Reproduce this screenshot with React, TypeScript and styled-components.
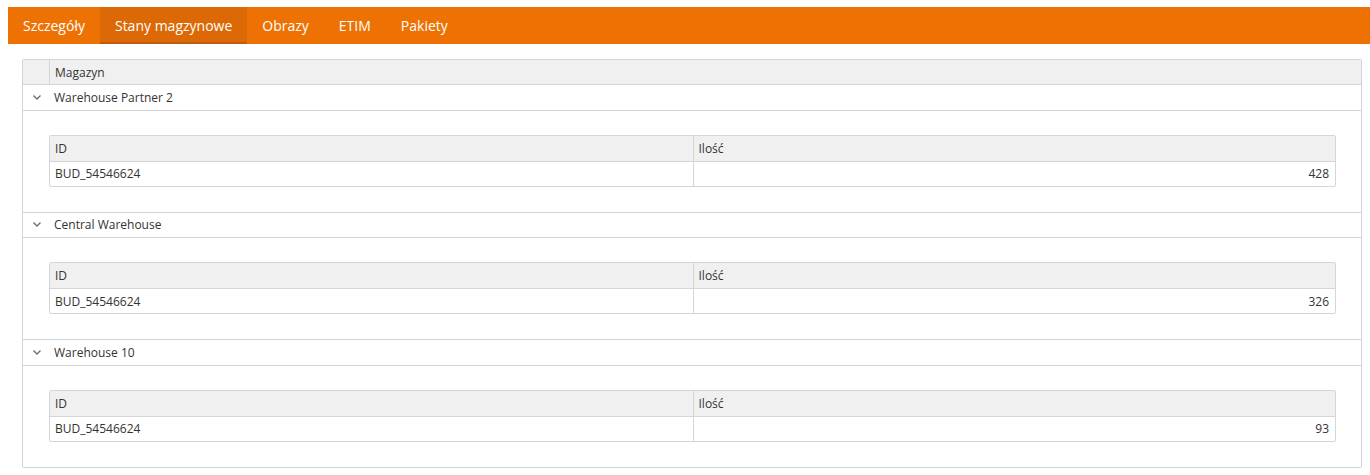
import React from 'react';
import styled, { createGlobalStyle } from 'styled-components';

type Stock = { id: string; qty: number };
type Warehouse = { name: string; items: Stock[] };

const warehouses: Warehouse[] = [
  { name: 'Warehouse Partner 2', items: [{ id: 'BUD_54546624', qty: 428 }] },
  { name: 'Central Warehouse', items: [{ id: 'BUD_54546624', qty: 326 }] },
  { name: 'Warehouse 10', items: [{ id: 'BUD_54546624', qty: 93 }] },
];

const tabs = ['Szczegóły', 'Stany magzynowe', 'Obrazy', 'ETIM', 'Pakiety'];

const App: React.FC = () => {
  return (
    <>
      <GlobalStyle />
      <TabStrip>
        {tabs.map((t, i) => (
          <Tab key={t} $active={i === 1}>
            {t}
          </Tab>
        ))}
      </TabStrip>
      <Content>
        <Grid>
          <HeaderRow>
            <ExpandCell />
            <HeaderCell>Magazyn</HeaderCell>
          </HeaderRow>
          {warehouses.map((w) => (
            <React.Fragment key={w.name}>
              <GroupRow>
                <ExpandCell>
                  <Chevron width="8" height="5" viewBox="0 0 8 5">
                    <path d="M0.5 0.5 L4 4 L7.5 0.5" fill="none" stroke="#6b6b6b" strokeWidth="1.3" />
                  </Chevron>
                </ExpandCell>
                <GroupName>{w.name}</GroupName>
              </GroupRow>
              <DetailRow>
                <DetailTable>
                  <SubHeader>
                    <SubCell>ID</SubCell>
                    <SubCell $divider>Ilość</SubCell>
                  </SubHeader>
                  {w.items.map((it) => (
                    <SubRow key={it.id}>
                      <SubCell>{it.id}</SubCell>
                      <SubCell $divider $right>
                        {it.qty}
                      </SubCell>
                    </SubRow>
                  ))}
                </DetailTable>
              </DetailRow>
            </React.Fragment>
          ))}
        </Grid>
      </Content>
    </>
  );
};

// Styled Components
const GlobalStyle = createGlobalStyle`
  html, body {
    margin: 0;
    padding: 0;
    background: #ffffff;
  }
  body {
    padding: 7px 0 0 8px;
    font-family: 'Open Sans', 'Liberation Sans', sans-serif;
    color: #333333;
    overflow: hidden;
  }
`;

const TabStrip = styled.div`
  display: flex;
  height: 37px;
  background-color: #ee7203;
`;

const Tab = styled.div<{ $active?: boolean }>`
  display: flex;
  align-items: center;
  padding: 1px 15px 0;
  font-size: 14px;
  color: #ffffff;
  box-sizing: border-box;
  background-color: ${(p) => (p.$active ? '#dc6906' : 'transparent')};
  border-bottom: 2px solid ${(p) => (p.$active ? '#bd5c0f' : 'transparent')};
`;

const Content = styled.div`
  padding: 15px 8px 0 14px;
`;

const Grid = styled.div`
  border: 1px solid #d5d5d5;
  border-radius: 2px;
  font-size: 12px;
`;

const HeaderRow = styled.div`
  display: grid;
  grid-template-columns: 26px 1fr;
  height: 24px;
  background-color: #f0f0f0;
  border-bottom: 1px solid #d5d5d5;
`;

const ExpandCell = styled.div`
  display: flex;
  align-items: center;
  justify-content: center;
  padding-left: 1px;
`;

const HeaderCell = styled.div`
  display: flex;
  align-items: center;
  padding-left: 5px;
  border-left: 1px solid #d5d5d5;
  color: #333333;
`;

const GroupRow = styled.div`
  display: grid;
  grid-template-columns: 26px 1fr;
  height: 24.5px;
  border-bottom: 1px solid #d5d5d5;
`;

const Chevron = styled.svg`
  display: block;
`;

const GroupName = styled.div`
  display: flex;
  align-items: center;
  padding-left: 5px;
`;

const DetailRow = styled.div`
  padding: 24px 25px 25px 26px;
  border-bottom: 1px solid #d5d5d5;

  &:last-child {
    border-bottom: none;
  }
`;

const DetailTable = styled.div`
  border: 1px solid #d5d5d5;
  border-radius: 2px;
`;

const SubHeader = styled.div`
  display: grid;
  grid-template-columns: 1fr 1fr;
  height: 25px;
  background-color: #f0f0f0;
  border-bottom: 1px solid #d5d5d5;
`;

const SubRow = styled.div`
  display: grid;
  grid-template-columns: 1fr 1fr;
  height: 24px;
`;

const SubCell = styled.div<{ $divider?: boolean; $right?: boolean }>`
  display: flex;
  align-items: center;
  justify-content: ${(p) => (p.$right ? 'flex-end' : 'flex-start')};
  padding: 0 6px 0 5px;
  border-left: ${(p) => (p.$divider ? '1px solid #d5d5d5' : 'none')};
`;

export default App;
